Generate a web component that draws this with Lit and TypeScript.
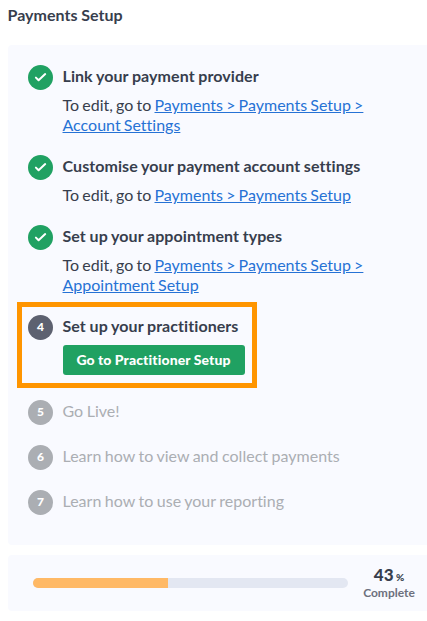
import { LitElement, html, css, nothing } from "lit";
import { customElement } from "lit/decorators.js";

interface Step { title: string; state: "done" | "current" | "todo"; links?: string[]; }

const STEPS: Step[] = [
  { title: "Link your payment provider", state: "done", links: ["Payments > Payments Setup >", "Account Settings"] },
  { title: "Customise your payment account settings", state: "done", links: ["Payments > Payments Setup"] },
  { title: "Set up your appointment types", state: "done", links: ["Payments > Payments Setup >", "Appointment Setup"] },
  { title: "Set up your practitioners", state: "current" },
  { title: "Go Live!", state: "todo" },
  { title: "Learn how to view and collect payments", state: "todo" },
  { title: "Learn how to use your reporting", state: "todo" },
];

@customElement("app-root")
export class AppRoot extends LitElement {
  static styles = css`
    :host { display: block; box-sizing: border-box; height: 621px; padding: 5px 0 0 8px; overflow: hidden; background: #fff; color: #373e4d; font: 16px/20px Lato, sans-serif; font-variant-ligatures: none; }
    * { box-sizing: border-box; }
    h1 { margin: 0 0 20px -0.5px; font-size: 16px; line-height: 20px; font-weight: 700; word-spacing: -0.3px; letter-spacing: 0.03px; }
    .steps { height: 500px; padding: 20px 0 0 20px; border-radius: 4px 0 0 4px; background: #f9faff; }
    .step { display: grid; grid-template-columns: 25px 1fr; column-gap: 9.5px; align-items: start; margin-bottom: 20px; }
    .badge { width: 25px; height: 25px; padding-bottom: 1px; border-radius: 50%; display: flex; align-items: center; justify-content: center; color: #fff; font-size: 12px; font-weight: 900; line-height: 12px; background: #abaeb3; }
    .done .badge { padding-bottom: 0; background: #20a162; }
    .title { padding-top: 1px; line-height: 20px; font-weight: 700; white-space: nowrap; word-spacing: -0.3px; letter-spacing: 0.07px; }
    .desc { margin-top: 9px; line-height: 20px; word-spacing: -0.9px; }
    .todo .title { font-weight: 400; color: #abaeb3; word-spacing: -0.6px; letter-spacing: 0.01px; }
    .todo { height: 25px; }
    a { color: #2672d5; text-decoration: underline; }
    .current { width: 240px; height: 86px; margin: -13px 0 12px -11px; padding: 8px 0 0 6px; border: 5px solid #ff9500; }
    .current .badge { background: #5d6170; }
    button { display: block; width: 182px; height: 30px; margin-top: 9px; padding: 0; border: 0; border-radius: 3px; background: #20a162; color: #fff; font: 900 14px/30px Lato, sans-serif; font-variant-ligatures: none; word-spacing: -0.2px; letter-spacing: 0.12px; }
    .progress { height: 56px; margin-top: 10px; padding: 0 12px 0 25px; display: flex; align-items: center; border-radius: 4px 0 0 4px; background: #f9faff; }
    .track { width: 315px; height: 10px; border-radius: 5px; overflow: hidden; background: #e3e7f2; }
    .fill { height: 100%; background: #ffb966; }
    .label { flex: 1; padding-left: 15px; text-align: center; font-size: 12px; line-height: 16px; font-weight: 700; color: #6d707d; }
    .value { height: 20px; line-height: 20px; font-size: 10px; color: #373e4d; font-weight: 900; }
    .value b { font-size: 17px; font-weight: 900; }
  `;

  private step(s: Step, i: number) {
    return html`<div class="step ${s.state}">
      <div class="badge">${s.state === "done"
        ? html`<svg width="13" height="11" viewBox="0 0 13 11" fill="none" stroke="#fff" stroke-width="2" stroke-linecap="round" stroke-linejoin="round"><path d="M1.9 5.6 4.6 8.3 11.2 2.1" /></svg>`
        : i + 1}</div>
      <div>
        <div class="title">${s.title}</div>
        ${s.links ? html`<div class="desc">To edit, go to <a>${s.links.map((l, n) => html`${n ? html`<br>` : nothing}${l}`)}</a></div>` : nothing}
        ${s.state === "current" ? html`<button>Go to Practitioner Setup</button>` : nothing}
      </div>
    </div>`;
  }

  render() {
    const percent = 43;
    return html`<h1>Payments Setup</h1>
      <div class="steps">${STEPS.map((s, i) => this.step(s, i))}</div>
      <div class="progress">
        <div class="track"><div class="fill" style="width:${percent}%"></div></div>
        <div class="label"><div class="value"><b>${percent}</b> %</div>Complete</div>
      </div>`;
  }
}
